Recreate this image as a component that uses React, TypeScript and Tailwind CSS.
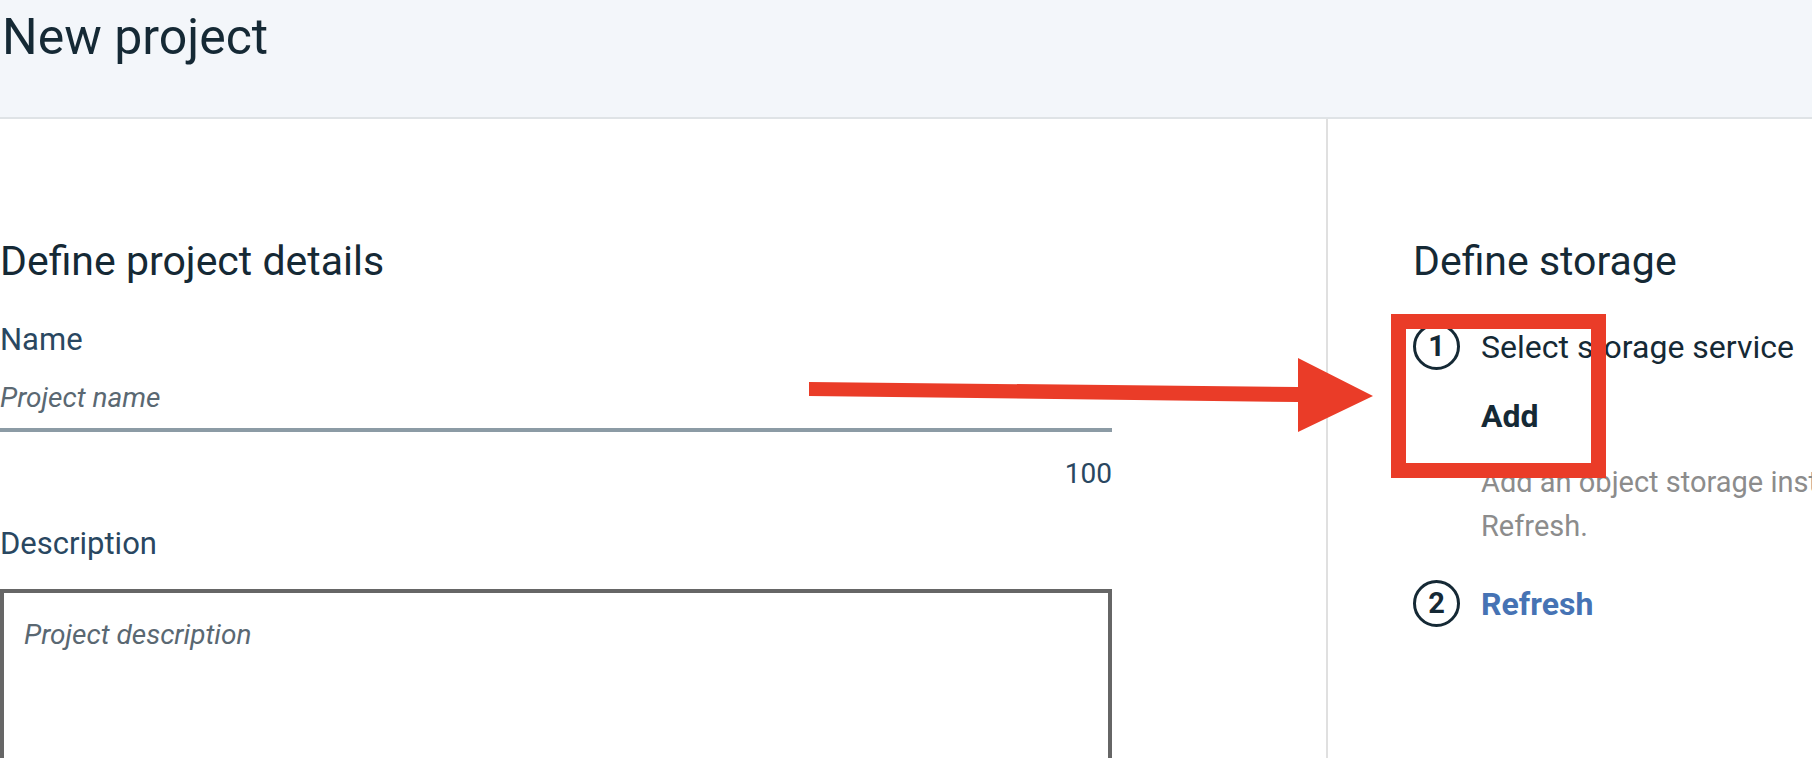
import React from "react";

const ink = "text-[#152935]";

function StepBadge({ n }: { n: number }) {
  return (
    <span
      className={`flex h-[47px] w-[47px] shrink-0 items-center justify-center rounded-full border-[3.5px] border-[#152935] text-[29px] font-bold leading-none ${ink}`}
    >
      {n}
    </span>
  );
}

function ProjectDetails() {
  return (
    <section className="w-[1326px] shrink-0 pt-[118px]">
      <div className="w-[1112px]">
        <h2 className={`text-[41px] leading-[48px] font-normal ${ink}`}>
          Define project details
        </h2>

        <label className="mt-[37px] block text-[31px] leading-[36px] font-normal text-[#294761]">
          Name
        </label>
        <div className="mt-[22px] border-b-4 border-[#8c9ba5] pb-[12px]">
          <span className="block text-[28px] leading-[36px] italic text-[#5a6872]">
            Project name
          </span>
        </div>
        <p className="mt-[24px] text-right text-[28px] leading-[36px] text-[#294761]">
          100
        </p>

        <label className="mt-[34px] block text-[31px] leading-[36px] font-normal text-[#294761]">
          Description
        </label>
        <div className="mt-[27px] h-[220px] border-4 border-[#666666] pl-[20px] pt-[24px]">
          <span className="block text-[28px] leading-[36px] italic text-[#5a6872]">
            Project description
          </span>
        </div>
      </div>
    </section>
  );
}

function StorageSetup() {
  return (
    <section className="flex-1 border-l-2 border-[#e0e0e0] pl-[85px] pt-[118px]">
      <h2 className={`text-[41px] leading-[48px] font-normal ${ink}`}>
        Define storage
      </h2>

      <div className="mt-[38px] flex items-center gap-[21px]">
        <StepBadge n={1} />
        <span className={`text-[32px] leading-[46px] whitespace-nowrap ${ink}`}>
          Select storage service
        </span>
      </div>
      <p className={`ml-[68px] mt-[23px] text-[32px] leading-[46px] font-bold ${ink}`}>
        Add
      </p>
      <p className="ml-[68px] mt-[21px] text-[29px] leading-[44px] whitespace-nowrap text-[#8c8c8c]">
        Add an object storage instance, then click
        <br />
        Refresh.
      </p>

      <div className="mt-[32px] flex items-center gap-[21px]">
        <StepBadge n={2} />
        <span className="text-[32px] leading-[46px] font-bold text-[#4673b4]">
          Refresh
        </span>
      </div>
    </section>
  );
}

export default function App() {
  return (
    <div className="relative h-[758px] w-[1812px] overflow-hidden bg-white font-['Roboto',sans-serif]">
      <header className="h-[119px] border-b-2 border-[#dfe3e6] bg-[#f3f6fa] pt-[8px]">
        <h1 className={`pl-[2px] text-[50px] leading-[58px] font-normal ${ink}`}>
          New project
        </h1>
      </header>

      <main className="flex h-[639px]">
        <ProjectDetails />
        <StorageSetup />
      </main>

      {/* callout drawn over the screenshot */}
      <svg
        className="pointer-events-none absolute left-0 top-0"
        width="1812"
        height="758"
        viewBox="0 0 1812 758"
      >
        <polygon
          points="809,382 1298,387 1298,358 1373,396 1298,432 1298,402 809,396"
          fill="#ea3c28"
        />
      </svg>
      <div className="pointer-events-none absolute left-[1391px] top-[314px] h-[164px] w-[215px] border-[15px] border-[#ea3c28]" />
    </div>
  );
}
